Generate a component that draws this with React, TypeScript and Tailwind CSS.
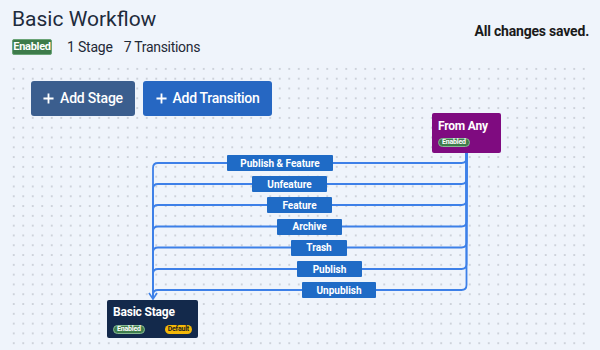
import React from "react";

type Transition = {
  label: string;
  y: number; // center of the edge, canvas coords
  left: number;
  width: number;
};

const SOURCE = { x: 456.5, y: 87 };
const TARGET = { x: 143, y: 234 };

const transitions: Transition[] = [
  { label: "Publish & Feature", y: 98, left: 217, width: 106 },
  { label: "Unfeature", y: 119, left: 242, width: 75 },
  { label: "Feature", y: 140, left: 257, width: 65 },
  { label: "Archive", y: 161.5, left: 267, width: 65 },
  { label: "Trash", y: 182.5, left: 281, width: 56 },
  { label: "Publish", y: 204, left: 287, width: 65 },
  { label: "Unpublish", y: 225, left: 292, width: 74 },
];

const edgePath = (y: number) => {
  const r = 5;
  return [
    `M ${SOURCE.x} ${SOURCE.y}`,
    `L ${SOURCE.x} ${y - r}`,
    `Q ${SOURCE.x} ${y} ${SOURCE.x - r} ${y}`,
    `L ${TARGET.x + r} ${y}`,
    `Q ${TARGET.x} ${y} ${TARGET.x} ${y + r}`,
    `L ${TARGET.x} ${TARGET.y}`,
  ].join(" ");
};

const Plus = () => (
  <svg width="11" height="11" viewBox="0 0 12 12" className="shrink-0">
    <path d="M6 0.5v11M0.5 6h11" stroke="white" strokeWidth="2" />
  </svg>
);

const TinyBadge = ({ label, tone }: { label: string; tone: "green" | "yellow" }) => (
  <span
    className={`flex h-[9px] items-center rounded-full px-[3px] text-[7px] font-bold leading-none tracking-[-0.2px] ${
      tone === "green"
        ? "border border-[#86b993] bg-[#3f7d4c] text-white"
        : "bg-[#f4b807] text-[#1f1f1f]"
    }`}
  >
    {label}
  </span>
);

export default function App() {
  return (
    <div className="h-[350px] w-[600px] overflow-hidden bg-[#eff4fb] font-['Roboto',sans-serif] text-[#1f2a37]">
      {/* Header */}
      <header className="flex h-[65px] items-start justify-between pl-3 pr-[11px] pt-[6px]">
        <div>
          <h1 className="text-[21px] leading-[27px] text-[#1e2b3c]">Basic Workflow</h1>
          <div className="mt-[6px] flex h-4 items-center">
            <span className="flex h-4 w-10 items-center justify-center rounded-[2px] border border-[#6aa477] bg-[#3d7b4a] text-[11px] font-bold tracking-[-0.3px] text-white">
              Enabled
            </span>
            <span className="ml-[15px] text-[14px] tracking-[-0.2px] text-[#1f2937]">1 Stage</span>
            <span className="ml-[11px] text-[14px] tracking-[-0.3px] text-[#1f2937]">7 Transitions</span>
          </div>
        </div>
        <p className="mt-[15px] text-[14px] font-bold tracking-[-0.2px] text-[#1a1a1a]">All changes saved.</p>
      </header>

      {/* Canvas */}
      <div className="relative mx-[10px] h-[285px] bg-[radial-gradient(circle,#cdd2da_0.8px,transparent_1.1px)] [background-position:-1px_-1px] [background-size:9.5px_9.8px]">
        <div className="flex gap-2 pl-[21px] pt-4">
          <button
            type="button"
            className="flex h-[35px] w-[104px] items-center justify-center gap-[6px] rounded-[3px] bg-[#3b5e8e] text-[14px] font-medium tracking-[-0.2px] text-white"
          >
            <Plus />
            Add Stage
          </button>
          <button
            type="button"
            className="flex h-[35px] w-[129px] items-center justify-center gap-[6px] rounded-[3px] bg-[#2667c2] text-[14px] font-medium tracking-[-0.3px] text-white"
          >
            <Plus />
            Add Transition
          </button>
        </div>

        {/* Edges */}
        <svg className="pointer-events-none absolute inset-0" width="580" height="285">
          {transitions.map((t) => (
            <path key={t.label} d={edgePath(t.y)} fill="none" stroke="#3d80e8" strokeWidth="1.8" />
          ))}
          <path
            d={`M ${TARGET.x - 4} ${TARGET.y - 6} L ${TARGET.x} ${TARGET.y} L ${TARGET.x + 4} ${TARGET.y - 6}`}
            fill="none"
            stroke="#3d80e8"
            strokeWidth="1.6"
          />
        </svg>

        {/* Edge labels */}
        {transitions.map((t) => (
          <div
            key={t.label}
            className="absolute flex h-4 items-center justify-center rounded-[1px] bg-[#1f6bc6] text-[10px] font-bold text-white"
            style={{ left: t.left, top: t.y - 8, width: t.width }}
          >
            {t.label}
          </div>
        ))}

        {/* Nodes */}
        <div className="absolute left-[422px] top-[48px] flex h-10 w-[69px] flex-col rounded-[2px] bg-[#7f0b80] px-[6px] pt-[6px]">
          <p className="whitespace-nowrap text-[12px] font-bold leading-[14px] tracking-[-0.2px] text-white">From Any</p>
          <div className="mt-[5px] flex">
            <TinyBadge label="Enabled" tone="green" />
          </div>
        </div>

        <div className="absolute left-[97px] top-[235px] flex h-[38px] w-[91px] flex-col rounded-[2px] bg-[#13294b] px-[6px] pt-[5px]">
          <p className="whitespace-nowrap text-[12px] font-bold leading-[14px] tracking-[-0.2px] text-white">Basic Stage</p>
          <div className="mt-[6px] flex items-center justify-between">
            <TinyBadge label="Enabled" tone="green" />
            <TinyBadge label="Default" tone="yellow" />
          </div>
        </div>
      </div>
    </div>
  );
}
